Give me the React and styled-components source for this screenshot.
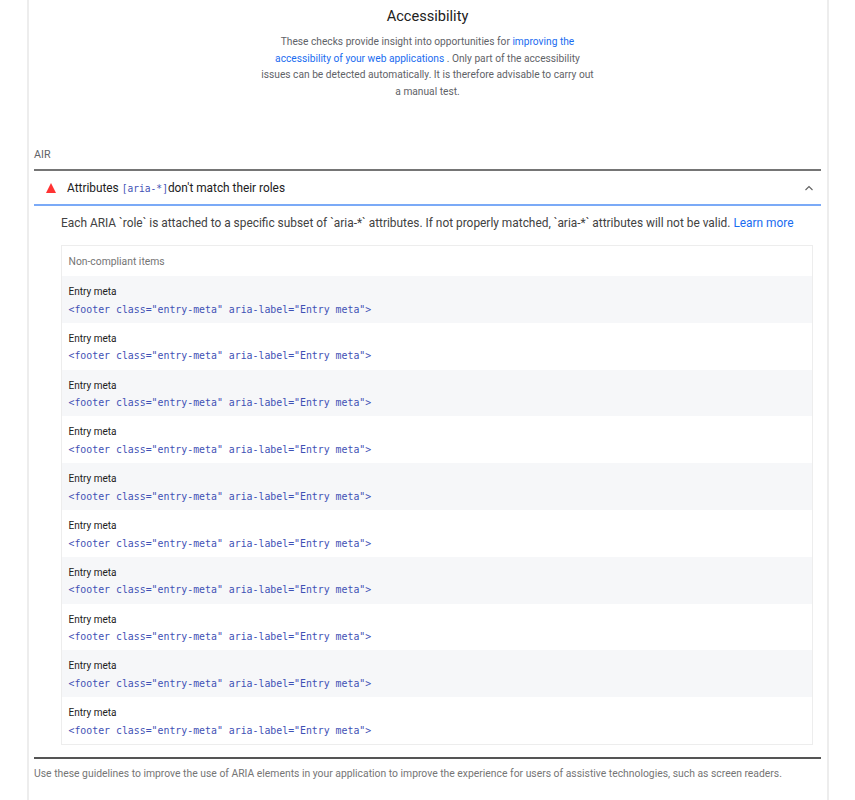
import React from "react";
import styled, { createGlobalStyle } from "styled-components";

const GlobalStyle = createGlobalStyle`
  html, body {
    margin: 0;
    padding: 0;
    background: #fff;
    font-family: Roboto, "Liberation Sans", sans-serif;
  }
`;

const Page = styled.div`
  width: 855px;
  height: 800px;
  overflow: hidden;
  box-sizing: border-box;
  padding: 0 26px 0 27px;
`;

const Panel = styled.div`
  height: 800px;
  box-sizing: border-box;
  border-left: 2px solid #ededed;
  border-right: 2px solid #ededed;
  padding: 0 6px 0 5px;
`;

const Intro = styled.header`
  height: 147px;
  padding-top: 7px;
  box-sizing: border-box;
  text-align: center;
`;

const Title = styled.h1`
  margin: 0 0 8px;
  font-size: 14.6px;
  line-height: 19px;
  font-weight: 400;
  color: #212121;
`;

const Lead = styled.p`
  margin: 0;
  font-size: 10.2px;
  line-height: 16.6px;
  color: #5f6368;
`;

const LeadLine = styled.span`
  display: block;
  white-space: nowrap;
`;

const Link = styled.a`
  color: #1a6cf0;
  text-decoration: none;
`;

const Group = styled.div`
  height: 22px;
  padding-top: 1px;
  box-sizing: border-box;
  font-size: 10.7px;
  line-height: 14px;
  color: #5f6368;
`;

const Audit = styled.section`
  border-top: 2px solid #757575;
`;

const AuditHead = styled.div`
  display: flex;
  align-items: center;
  height: 35px;
  box-sizing: border-box;
  padding: 0 7px 0 12px;
  border-bottom: 2px solid #7baaf7;
  font-size: 11.85px;
  color: #212121;
`;

const Triangle = styled.svg`
  width: 10px;
  height: 10px;
  margin-right: 11px;
  flex: none;
`;

const HeadText = styled.span`
  flex: 1;
`;

const Code = styled.code`
  font-family: "DejaVu Sans Mono", "Liberation Mono", monospace;
  font-size: 9.6px;
  color: #3f51b5;
  margin-left: 3px;
`;

const Chevron = styled.svg`
  width: 10px;
  height: 6px;
  flex: none;
`;

const AuditBody = styled.div`
  padding: 10px 0 0 27px;
  height: 553px;
  box-sizing: border-box;
  border-bottom: 2px solid #555;
`;

const AuditText = styled.p`
  margin: 0 0 14px;
  font-size: 11.9px;
  line-height: 15px;
  color: #424242;
  white-space: nowrap;
`;

const ItemTable = styled.div`
  width: 752px;
  box-sizing: border-box;
  border: 1px solid #ededed;
`;

const TableTitle = styled.div`
  height: 30px;
  padding: 1px 0 0 6.5px;
  box-sizing: border-box;
  font-size: 10.35px;
  line-height: 30px;
  color: #757575;
`;

const Row = styled.div`
  height: 46.8px;
  box-sizing: border-box;
  padding: 8px 6.5px 0;
  background: ${(props) => (props.$shaded ? "#f6f7f9" : "#fff")};
`;

const RowLabel = styled.div`
  font-size: 10px;
  line-height: 15px;
  color: #212121;
`;

const RowCode = styled.code`
  display: block;
  margin-top: 2.6px;
  font-family: "DejaVu Sans Mono", "Liberation Mono", monospace;
  font-size: 9.87px;
  line-height: 15px;
  color: #3f51b5;
  white-space: pre;
`;

const Guideline = styled.p`
  margin: 8px 0 0;
  font-size: 10.37px;
  line-height: 14px;
  color: #757575;
  white-space: nowrap;
`;

const rows = Array.from({ length: 10 }, (_, i) => i);

export default function App() {
  return (
    <>
      <GlobalStyle />
      <Page>
        <Panel>
          <Intro>
            <Title>Accessibility</Title>
            <Lead>
              <LeadLine>
                These checks provide insight into opportunities for <Link href="#">improving the</Link>
              </LeadLine>
              <LeadLine>
                <Link href="#">accessibility of your web applications</Link> . Only part of the accessibility
              </LeadLine>
              <LeadLine>issues can be detected automatically. It is therefore advisable to carry out</LeadLine>
              <LeadLine>a manual test.</LeadLine>
            </Lead>
          </Intro>
          <Group>AIR</Group>
          <Audit>
            <AuditHead>
              <Triangle viewBox="0 0 10 10">
                <polygon points="5,0 10,10 0,10" fill="#ff3333" />
              </Triangle>
              <HeadText>
                Attributes<Code>[aria-*]</Code>don't match their roles
              </HeadText>
              <Chevron viewBox="0 0 10 6">
                <path d="M1.5 5 L5 1.5 L8.5 5" fill="none" stroke="#616161" strokeWidth="1.1" />
              </Chevron>
            </AuditHead>
            <AuditBody>
              <AuditText>
                Each ARIA `role` is attached to a specific subset of `aria-*` attributes. If not properly matched,
                `aria-*` attributes will not be valid. <Link href="#">Learn more</Link>
              </AuditText>
              <ItemTable>
                <TableTitle>Non-compliant items</TableTitle>
                {rows.map((i) => (
                  <Row key={i} $shaded={i % 2 === 0}>
                    <RowLabel>Entry meta</RowLabel>
                    <RowCode>{'<footer class="entry-meta" aria-label="Entry meta">'}</RowCode>
                  </Row>
                ))}
              </ItemTable>
            </AuditBody>
          </Audit>
          <Guideline>
            Use these guidelines to improve the use of ARIA elements in your application to improve the experience for
            users of assistive technologies, such as screen readers.
          </Guideline>
        </Panel>
      </Page>
    </>
  );
}
